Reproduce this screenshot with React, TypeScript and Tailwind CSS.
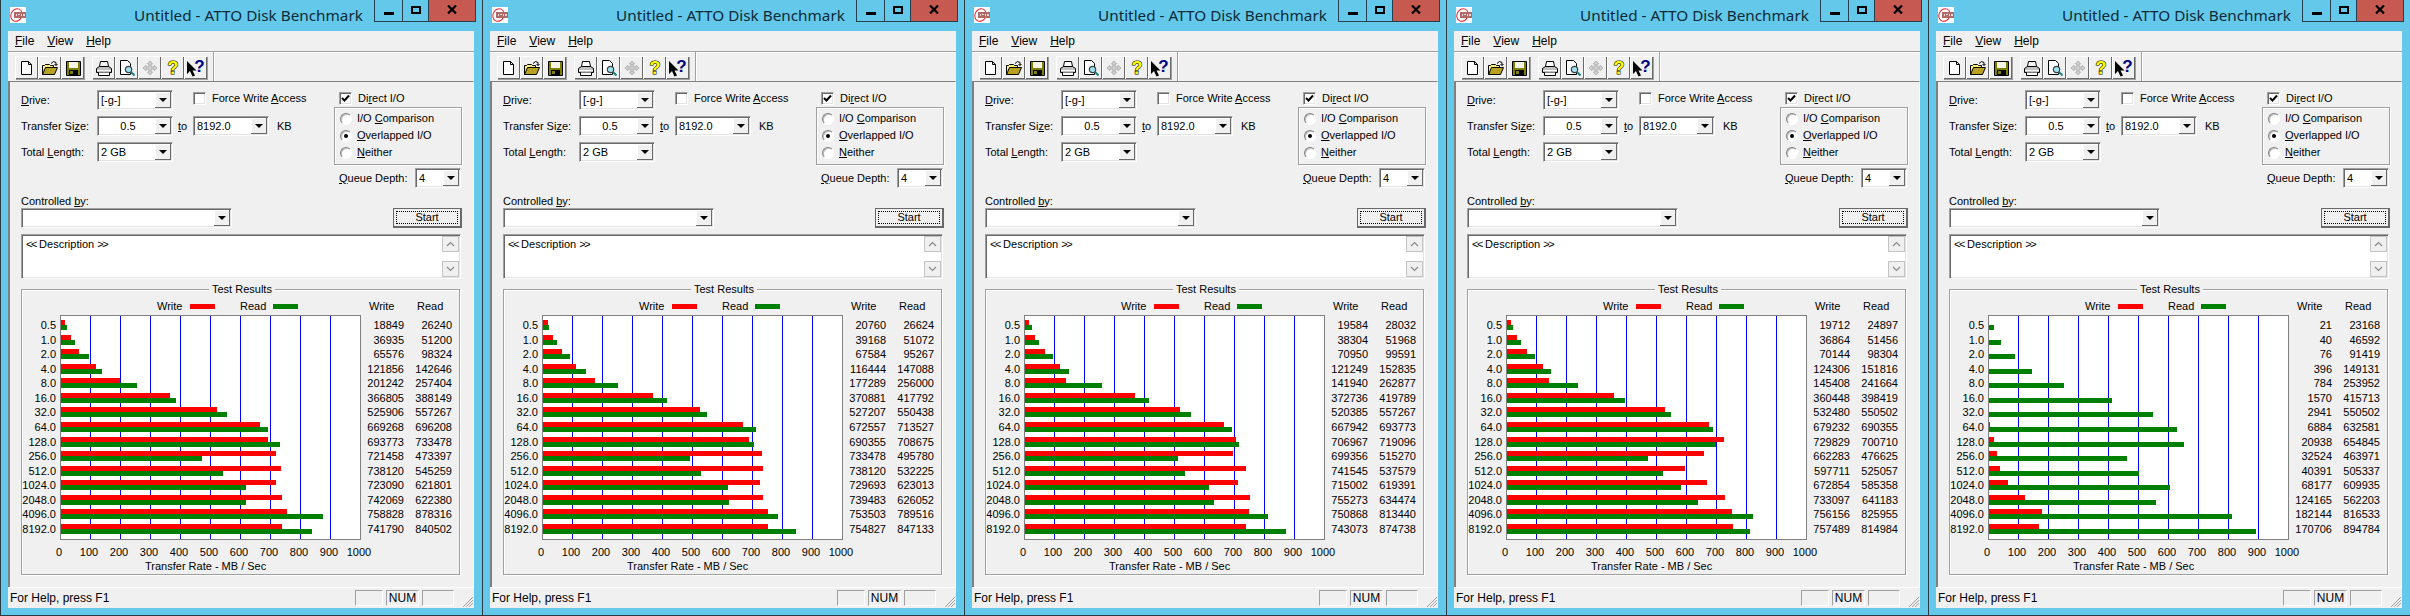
import type { ReactNode } from 'react';

const SIZES = ['0.5', '1.0', '2.0', '4.0', '8.0', '16.0', '32.0', '64.0', '128.0', '256.0', '512.0', '1024.0', '2048.0', '4096.0', '8192.0'];
const TICKS = [0, 100, 200, 300, 400, 500, 600, 700, 800, 900, 1000];

const RUNS = [
  {
    write: [18849, 36935, 65576, 121856, 201242, 366805, 525906, 669268, 693773, 721458, 738120, 723090, 742069, 758828, 741790],
    read: [26240, 51200, 98324, 142646, 257404, 388149, 557267, 696208, 733478, 473397, 545259, 621801, 622380, 878316, 840502],
  },
  {
    write: [20760, 39168, 67584, 116444, 177289, 370881, 527207, 672557, 690355, 733478, 738120, 729693, 739483, 753503, 754827],
    read: [26624, 51072, 95267, 147088, 256000, 417792, 550438, 713527, 708675, 495780, 532225, 623013, 626052, 789516, 847133],
  },
  {
    write: [19584, 38304, 70950, 121249, 141940, 372736, 520385, 667942, 706967, 699356, 741545, 715002, 755273, 750868, 743073],
    read: [28032, 51968, 99591, 152835, 262877, 419789, 557267, 693773, 719096, 515270, 537579, 619391, 634474, 813440, 874738],
  },
  {
    write: [19712, 36864, 70144, 124306, 145408, 360448, 532480, 679232, 729829, 662283, 597711, 672854, 733097, 756156, 757489],
    read: [24897, 51456, 98304, 151816, 241664, 398419, 550502, 690355, 700710, 476625, 525057, 585358, 641183, 825955, 814984],
  },
  {
    write: [21, 40, 76, 396, 784, 1570, 2941, 6884, 20938, 32524, 40391, 68177, 124165, 182144, 170706],
    read: [23168, 46592, 91419, 149131, 253952, 415713, 550502, 632581, 654845, 463971, 505337, 609935, 562203, 816533, 894784],
  },
];

const SUNKEN = 'border border-t-[#a0a0a0] border-l-[#a0a0a0] border-b-white border-r-white shadow-[inset_1px_1px_0_#696969,inset_-1px_-1px_0_#e3e3e3]';
const ETCHED = 'border border-[#a0a0a0] shadow-[1px_1px_0_#fff,inset_1px_1px_0_#fff]';
const THIN_SUNKEN = 'border border-t-[#a0a0a0] border-l-[#a0a0a0] border-b-white border-r-white';

// ---- Icons

function AttoLogo() {
  return (
    <svg width="16" height="16" viewBox="0 0 16 16" className="block">
      <rect width="16" height="16" fill="#fff" />
      <ellipse cx="6.5" cy="8" rx="5.5" ry="6.5" fill="none" stroke="#e8262c" strokeWidth="1" transform="rotate(25 6.5 8)" />
      <rect x="4" y="5" width="12" height="6" fill="#b06a68" />
      <path d="M6 7h1v2H6zM8 7h2v1H8zM11 7h1v2h-1zM13 7h2v2h-2z" fill="#e6d6d4" />
    </svg>
  );
}

function NewIcon() {
  return (
    <svg width="16" height="16" viewBox="0 0 16 16">
      <path d="M2.500 1.500h7l3 3v10h-10z" fill="#fff" stroke="#000" />
      <path d="M9.500 1.500v3h3" fill="none" stroke="#000" />
    </svg>
  );
}

function OpenIcon() {
  return (
    <svg width="17" height="16" viewBox="0 0 17 16">
      <path d="M.5 14.500v-9h2l1-1h4l1 1h3v2" fill="#fff080" stroke="#000" />
      <path d="M.5 14.500l3-7h12l-3 7z" fill="#b8a020" stroke="#000" />
      <path d="M9 3.500l2.500-2 2.500 1v3M14 5.500l-1.500-1.500M14 5.500l1.500-1.500" fill="none" stroke="#000" />
    </svg>
  );
}

function SaveIcon() {
  return (
    <svg width="15" height="15" viewBox="0 0 15 15">
      <path d="M.5 .5h14v14H.5z" fill="#808000" stroke="#000" />
      <rect x="3" y="1" width="9" height="6" fill="#f4f4e8" />
      <rect x="3" y="9" width="9" height="5" fill="#000" />
      <rect x="4" y="10" width="3" height="3" fill="#808000" />
    </svg>
  );
}

function PrintIcon() {
  return (
    <svg width="16" height="15" viewBox="0 0 16 15">
      <path d="M4.500 .5h7l1 5h-9z" fill="#fff" stroke="#000" />
      <path d="M.5 7.500l3-2h9l3 2v4h-15z" fill="#c0c0c0" stroke="#000" />
      <path d="M1 9.500h14" stroke="#fff" />
      <path d="M2.500 11.500v3h11v-3" fill="#fff" stroke="#000" />
    </svg>
  );
}

function PreviewIcon() {
  return (
    <svg width="16" height="16" viewBox="0 0 16 16">
      <path d="M1.500 .5h7l3 3v11h-10z" fill="#fff" stroke="#000" />
      <circle cx="9.500" cy="9.500" r="3.200" fill="#9fe0f0" stroke="#404040" strokeWidth="1.200" />
      <path d="M12 12l3.500 3.500" stroke="#208080" strokeWidth="2" />
    </svg>
  );
}

function MoveIcon() {
  return (
    <svg width="16" height="16" viewBox="0 0 16 16">
      <path d="M8 1l2.500 3h-1.500v3h3v-1.500l3 2.500-3 2.500v-1.500h-3v3h1.500l-2.500 3-2.500-3h1.500v-3h-3v1.500l-3-2.500 3-2.500v1.500h3v-3h-1.500z" fill="#d8d8d8" stroke="#a0a0a0" strokeWidth=".8" />
    </svg>
  );
}

function HelpIcon() {
  return (
    <svg width="16" height="18" viewBox="0 0 16 18">
      <text x="8" y="15" textAnchor="middle" fontFamily="'Liberation Sans', sans-serif" fontSize="18" fontWeight="700" fill="#ffff00" stroke="#000" strokeWidth="1.100" paintOrder="stroke">?</text>
    </svg>
  );
}

function ContextHelpIcon() {
  return (
    <svg width="20" height="20" viewBox="0 0 20 20">
      <path d="M1 3v13l3-3 2.500 5.500 2.500-1-2.500-5h4z" fill="#000" />
      <text x="13.500" y="14" textAnchor="middle" fontFamily="'Liberation Sans', sans-serif" fontSize="17" fontWeight="700" fill="#000080">?</text>
    </svg>
  );
}

function ToolButton({ children }: { children: ReactNode }) {
  return (
    <div className="flex h-[23px] w-[23px] items-center justify-center border-t border-l border-t-white border-l-white shadow-[inset_-1px_-1px_0_#696969,1px_1px_0_#a0a0a0]">
      {children}
    </div>
  );
}

// ---- Form controls

function ComboBox({ value, width, center }: { value: string; width: string; center?: boolean }) {
  return (
    <div className={`flex h-[20px] items-stretch bg-white p-[1px] ${SUNKEN} ${width}`}>
      <div className={`flex-1 pl-[2px] leading-[16px] ${center ? 'text-center' : ''}`}>{value}</div>
      <div className="flex w-[16px] items-center justify-center bg-[#f0f0f0] shadow-[inset_-1px_-1px_0_#696969,inset_1px_1px_0_#fff]">
        <div className="h-0 w-0 border-x-[4px] border-t-[4px] border-x-transparent border-t-black" />
      </div>
    </div>
  );
}

function CheckBox({ label, checked }: { label: ReactNode; checked?: boolean }) {
  return (
    <div className="flex h-[13px] items-center gap-[6px] leading-[13px]">
      <div className={`flex h-[13px] w-[13px] items-center justify-center bg-white ${SUNKEN}`}>
        {checked && (
          <svg width="9" height="9" viewBox="0 0 9 9">
            <path d="M1 4l2.500 2.500L8 1.500" fill="none" stroke="#000" strokeWidth="2" />
          </svg>
        )}
      </div>
      <span>{label}</span>
    </div>
  );
}

function Radio({ label, selected }: { label: ReactNode; selected?: boolean }) {
  return (
    <div className="flex h-[17px] items-center gap-[5px]">
      <div className="flex h-[12px] w-[12px] items-center justify-center rounded-full border border-t-[#808080] border-l-[#808080] border-b-white border-r-white bg-white shadow-[inset_1px_1px_0_#c0c0c0]">
        {selected && <div className="h-[4px] w-[4px] rounded-full bg-black" />}
      </div>
      <span>{label}</span>
    </div>
  );
}

function ScrollArrow({ down }: { down?: boolean }) {
  return (
    <div className="flex h-[16px] items-center justify-center border border-[#c4c4c4] bg-[#f0f0f0]">
      <svg width="9" height="6" viewBox="0 0 9 6">
        <path d={down ? 'M1 1l3.500 3.500L8 1' : 'M1 5l3.500-3.500L8 5'} fill="none" stroke="#8a8a8a" strokeWidth="1.200" />
      </svg>
    </div>
  );
}

// ---- Chart

function BarChart({ write, read }: { write: number[]; read: number[] }) {
  const barWidth = (v: number) => Math.max(0, Math.floor(v * 0.0003) - 1);
  return (
    <svg width="301" height="225" viewBox="0 0 301 225" shapeRendering="crispEdges" className="ml-[4px] shrink-0">
      <rect x=".5" y=".5" width="300" height="224" fill="#fff" stroke="#808080" />
      {[1, 2, 3, 4, 5, 6, 7, 8, 9].map((n) => (
        <rect key={n} x={n * 30} y="1" width="1" height="223" fill="#0000ff" />
      ))}
      {SIZES.map((s, i) => {
        const y = 5 + Math.round(i * 14.57);
        return (
          <g key={s}>
            <rect x="1" y={y} width={barWidth(write[i])} height="5" fill="#ff0000" />
            <rect x="1" y={y + 5} width={barWidth(read[i])} height="5" fill="#008000" />
          </g>
        );
      })}
    </svg>
  );
}

function ValueColumn({ values, width }: { values: (string | number)[]; width: string }) {
  return (
    <div className={`mt-[3px] shrink-0 text-right ${width}`}>
      {values.map((v, i) => (
        <div key={i} className="h-[14.57px] leading-[14.57px]">{v}</div>
      ))}
    </div>
  );
}

function TestResults({ write, read }: { write: number[]; read: number[] }) {
  return (
    <div className={`relative mt-[10px] ml-[11px] h-[286px] w-[439px] pt-[9px] ${ETCHED}`}>
      <div className="absolute top-[-7px] left-[187px] bg-[#f0f0f0] px-[3px] leading-[13px]">Test Results</div>
      <div className="flex h-[14px] items-center">
        <span className="ml-[135px] w-[33px]">Write</span>
        <div className="h-[5px] w-[25px] bg-[#ff0000]" />
        <span className="ml-[25px] w-[33px]">Read</span>
        <div className="h-[5px] w-[25px] bg-[#008000]" />
        <span className="ml-[71px] w-[48px]">Write</span>
        <span>Read</span>
      </div>
      <div className="mt-[2px] flex">
        <ValueColumn values={SIZES} width="w-[34px]" />
        <BarChart write={write} read={read} />
        <ValueColumn values={write} width="w-[43px]" />
        <ValueColumn values={read} width="w-[48px]" />
      </div>
      <div className="mt-[5px] ml-[22px] flex h-[14px] leading-[14px]">
        {TICKS.map((t) => (
          <div key={t} className="w-[30px] shrink-0 text-center">{t}</div>
        ))}
      </div>
      <div className="ml-[123px] h-[14px] leading-[14px] whitespace-pre">Transfer Rate - MB / Sec</div>
    </div>
  );
}

// ---- One benchmark window

function BenchmarkWindow({ write, read }: { write: number[]; read: number[] }) {
  return (
    <div className="flex h-[616px] w-[482px] shrink-0 flex-col border-b border-l border-[#2b3a42] bg-[#63c8ea] text-[11px] text-black [font-family:'Liberation_Sans',Arial,sans-serif]">
      {/* Title bar */}
      <div className="flex h-[31px] shrink-0 items-start">
        <div className="mt-[7px] ml-[9px]"><AttoLogo /></div>
        <div className="mt-[5px] ml-[108px] text-[15.3px] leading-[20px] whitespace-nowrap text-[#0c2a38] [font-family:'Noto_Sans',sans-serif]">
          Untitled - ATTO Disk Benchmark
        </div>
        <div className="ml-auto mr-[6px] flex h-[22px] border border-t-0 border-[#24404e]">
          <div className="flex w-[28px] items-center justify-center border-r border-[#24404e]">
            <div className="mt-[5px] h-[3px] w-[10px] bg-black" />
          </div>
          <div className="flex w-[26px] items-center justify-center border-r border-[#24404e]">
            <div className="mt-[-2px] h-[8px] w-[10px] border-2 border-black" />
          </div>
          <div className="flex w-[46px] items-center justify-center bg-[#c65a50]">
            <svg width="10" height="9" viewBox="0 0 10 9" className="mt-[-2px]">
              <path d="M1 .5l8 8M9 .5l-8 8" stroke="#000" strokeWidth="2.200" />
            </svg>
          </div>
        </div>
      </div>

      {/* Client area */}
      <div className="ml-[7px] flex h-[577px] w-[466px] flex-col bg-[#f0f0f0]">
        {/* Menu */}
        <div className="flex h-[20px] shrink-0 items-center gap-[13px] pl-[7px] text-[12px]">
          <span><u>F</u>ile</span>
          <span><u>V</u>iew</span>
          <span><u>H</u>elp</span>
        </div>

        {/* Toolbar */}
        <div className="flex h-[30px] shrink-0 border-t border-[#a0a0a0] pt-[4px] pl-[7px] shadow-[inset_0_1px_0_#fff]">
          <div className="flex"><ToolButton><NewIcon /></ToolButton><ToolButton><OpenIcon /></ToolButton><ToolButton><SaveIcon /></ToolButton></div>
          <div className="ml-[8px] flex">
            <ToolButton><PrintIcon /></ToolButton>
            <ToolButton><PreviewIcon /></ToolButton>
            <ToolButton><MoveIcon /></ToolButton>
            <ToolButton><HelpIcon /></ToolButton>
            <ToolButton><ContextHelpIcon /></ToolButton>
          </div>
          <div className="ml-[6px] mt-[-4px] h-[29px] w-[2px] border-l border-[#a0a0a0] bg-white" />
        </div>

        {/* Form panel */}
        <div className="h-[506px] shrink-0 border-t border-l-2 border-r border-t-[#808080] border-l-[#808080] border-r-white">
          <div className="flex">
            <div className="mt-[8px] ml-[11px] flex w-[313px] flex-col gap-[6px]">
              <div className="flex h-[20px] items-center">
                <span className="w-[76px]"><u>D</u>rive:</span>
                <ComboBox value="[-g-]" width="w-[76px]" />
                <div className="mb-[4px] ml-[20px]"><CheckBox label={<>Force Write <u>A</u>ccess</>} /></div>
              </div>
              <div className="flex h-[20px] items-center">
                <span className="w-[76px]">Transfer Si<u>z</u>e:</span>
                <ComboBox value="0.5" width="w-[76px]" center />
                <span className="ml-[5px] w-[15px]"><u>t</u>o</span>
                <ComboBox value="8192.0" width="w-[76px]" />
                <span className="ml-[8px]">KB</span>
              </div>
              <div className="flex h-[20px] items-center">
                <span className="w-[76px]">Total <u>L</u>ength:</span>
                <ComboBox value="2 GB" width="w-[76px]" />
              </div>
            </div>
            <div className="mt-[10px] w-[128px]">
              <div className="pl-[5px]"><CheckBox label={<>Di<u>r</u>ect I/O</>} checked /></div>
              <div className={`mt-[2px] h-[58px] pt-[2px] pl-[5px] ${ETCHED}`}>
                <Radio label={<>I/O <u>C</u>omparison</>} />
                <Radio label={<><u>O</u>verlapped I/O</>} selected />
                <Radio label={<><u>N</u>either</>} />
              </div>
              <div className="mt-[3px] flex items-center pl-[5px]">
                <span className="w-[76px]"><u>Q</u>ueue Depth:</span>
                <ComboBox value="4" width="w-[46px]" />
              </div>
            </div>
          </div>

          <div className="mt-[7px] ml-[11px] h-[13px] leading-[13px]">Controlled <u>b</u>y:</div>
          <div className="ml-[11px] flex">
            <ComboBox value="" width="w-[211px]" />
            <div className="ml-[161px] flex h-[20px] w-[69px] items-center justify-center border border-[#696969] border-r-2 border-b-2 bg-[#f0f0f0] p-[2px]">
              <div className="flex h-full w-full items-center justify-center border border-dotted border-black">Start</div>
            </div>
          </div>

          <div className={`mt-[6px] ml-[11px] flex h-[45px] w-[440px] bg-white p-[1px] ${SUNKEN}`}>
            <div className="flex-1 pl-[3px] leading-[17px]">
              <span className="tracking-[-1.4px]">&lt;&lt;</span> Description <span className="tracking-[-1.4px]">&gt;&gt;</span>
            </div>
            <div className="flex w-[17px] flex-col justify-between">
              <ScrollArrow />
              <ScrollArrow down />
            </div>
          </div>

          <TestResults write={write} read={read} />
        </div>

        {/* Status bar */}
        <div className="flex h-[21px] shrink-0 items-center border-t border-white pl-[2px] text-[12px]">
          <span>For Help, press F1</span>
          <div className={`ml-auto h-[16px] w-[28px] ${THIN_SUNKEN}`} />
          <div className={`ml-[3px] flex h-[16px] w-[33px] items-center justify-center ${THIN_SUNKEN}`}>NUM</div>
          <div className={`ml-[3px] h-[16px] w-[32px] ${THIN_SUNKEN}`} />
          <svg width="12" height="12" viewBox="0 0 12 12" className="mt-[8px] ml-[8px]">
            <path d="M11 1L1 11M11 4l-7 7M11 7l-4 4" stroke="#a0a0a0" fill="none" />
          </svg>
        </div>
      </div>
    </div>
  );
}

export default function App() {
  return (
    <div className="flex h-[616px] w-[2410px] overflow-hidden">
      {RUNS.map((run, i) => (
        <BenchmarkWindow key={i} write={run.write} read={run.read} />
      ))}
    </div>
  );
}
